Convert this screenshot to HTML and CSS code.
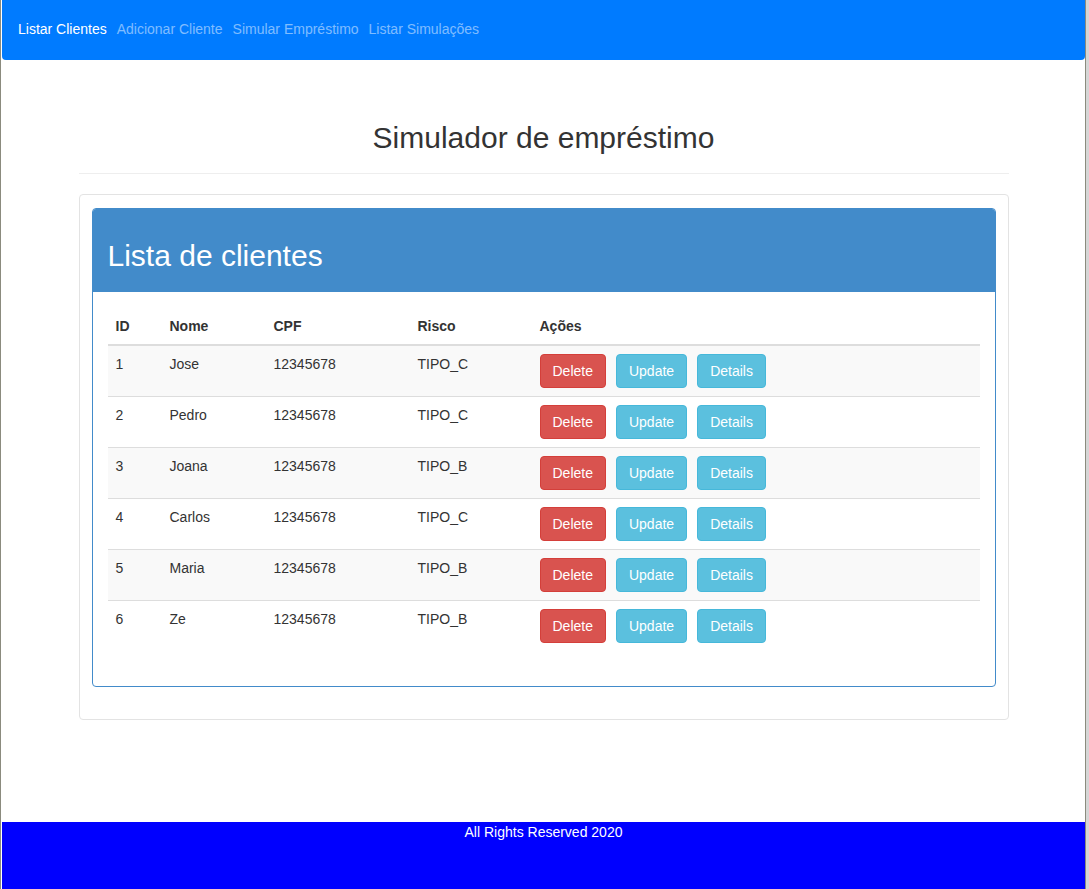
FILE: index.html
```html
<!DOCTYPE html>
<html lang="pt">
<head>
<meta charset="utf-8">
<title>Simulador de empréstimo</title>
<link rel="stylesheet" href="styles.css">
</head>
<body>
<div class="frame">
  <div class="page">
    <nav class="navbar">
      <a class="nav-link active" href="#">Listar Clientes</a>
      <a class="nav-link" href="#">Adicionar Cliente</a>
      <a class="nav-link" href="#">Simular Empréstimo</a>
      <a class="nav-link" href="#">Listar Simulações</a>
    </nav>
    <main class="container">
      <h1 class="page-title">Simulador de empréstimo</h1>
      <div class="well">
        <div class="panel">
          <div class="panel-heading">
            <h2 class="panel-title">Lista de clientes</h2>
          </div>
          <div class="panel-body">
            <table class="table">
              <thead>
                <tr>
                  <th class="c-id">ID</th>
                  <th class="c-nome">Nome</th>
                  <th class="c-cpf">CPF</th>
                  <th class="c-risco">Risco</th>
                  <th>Ações</th>
                </tr>
              </thead>
              <tbody>
                <tr><td>1</td><td>Jose</td><td>12345678</td><td>TIPO_C</td><td class="actions"><button class="btn btn-danger">Delete</button><button class="btn btn-info">Update</button><button class="btn btn-info">Details</button></td></tr>
                <tr><td>2</td><td>Pedro</td><td>12345678</td><td>TIPO_C</td><td class="actions"><button class="btn btn-danger">Delete</button><button class="btn btn-info">Update</button><button class="btn btn-info">Details</button></td></tr>
                <tr><td>3</td><td>Joana</td><td>12345678</td><td>TIPO_B</td><td class="actions"><button class="btn btn-danger">Delete</button><button class="btn btn-info">Update</button><button class="btn btn-info">Details</button></td></tr>
                <tr><td>4</td><td>Carlos</td><td>12345678</td><td>TIPO_C</td><td class="actions"><button class="btn btn-danger">Delete</button><button class="btn btn-info">Update</button><button class="btn btn-info">Details</button></td></tr>
                <tr><td>5</td><td>Maria</td><td>12345678</td><td>TIPO_B</td><td class="actions"><button class="btn btn-danger">Delete</button><button class="btn btn-info">Update</button><button class="btn btn-info">Details</button></td></tr>
                <tr><td>6</td><td>Ze</td><td>12345678</td><td>TIPO_B</td><td class="actions"><button class="btn btn-danger">Delete</button><button class="btn btn-info">Update</button><button class="btn btn-info">Details</button></td></tr>
              </tbody>
            </table>
          </div>
        </div>
      </div>
    </main>
    <footer class="footer">All Rights Reserved 2020</footer>
  </div>
</div>
</body>
</html>
```

FILE: styles.css
```css
* { box-sizing: border-box; }
html, body {
  margin: 0;
  padding: 0;
  height: 100%;
}
body {
  font-family: "Liberation Sans", Arial, sans-serif;
  font-size: 14px;
  line-height: 20px;
  color: #333;
  background: #d6d6d6;
}
.frame {
  display: flex;
  height: 889px;
  border-left: 1px solid #8b8b7e;
  padding-left: 1px;
  background: #fff;
  width: 1086px;
  border-right: 1px solid #8b8b7e;
}
.page {
  flex: 1;
  display: flex;
  flex-direction: column;
  background: #fff;
}
.navbar {
  height: 60px;
  background: #007bff;
  display: flex;
  align-items: center;
  padding: 0 0 2px 11px;
  border-radius: 0 0 4px 4px;
}
.nav-link {
  color: rgba(255, 255, 255, 0.5);
  text-decoration: none;
  padding: 0 5px;
  font-size: 14px;
}
.nav-link.active { color: #fff; }
.container {
  width: 930px;
  margin: 0 auto;
}
.page-title {
  margin: 61px 0 0;
  font-size: 30px;
  font-weight: 400;
  line-height: 33px;
  text-align: center;
  color: #333;
  padding-bottom: 19px;
  border-bottom: 1px solid #eee;
}
.well {
  margin-top: 20px;
  border: 1px solid #e3e3e3;
  border-radius: 4px;
  padding: 13px 12px 12px;
  background: #fff;
}
.panel {
  border: 1px solid #428bca;
  border-radius: 4px;
  margin-bottom: 20px;
}
.panel-heading {
  background: #428bca;
  padding: 10px 15px;
  border-radius: 3px 3px 0 0;
}
.panel-title {
  margin: 20px 0 10px;
  font-size: 30px;
  font-weight: 400;
  line-height: 33px;
  color: #fff;
}
.panel-body { padding: 16px 15px 15px; }
.table {
  width: 100%;
  border-collapse: collapse;
  margin-bottom: 20px;
}
.table th, .table td {
  padding: 8px;
  text-align: left;
  vertical-align: top;
  line-height: 20px;
}
.table th {
  font-weight: 700;
  border-bottom: 2px solid #ddd;
}
.table td { border-top: 1px solid #ddd; }
.table tbody tr:first-child td { border-top: 0; }
.table tbody tr:nth-child(odd) { background: #f9f9f9; }
.c-id { width: 54px; }
.c-nome { width: 104px; }
.c-cpf { width: 144px; }
.c-risco { width: 122px; }
.actions {
  display: flex;
  gap: 10px;
}
.btn {
  font-family: inherit;
  font-size: 14px;
  line-height: 20px;
  padding: 6px 12px;
  border-radius: 4px;
  border: 1px solid transparent;
  color: #fff;
  cursor: pointer;
}
.btn-danger { background: #d9534f; border-color: #d43f3a; }
.btn-info { background: #5bc0de; border-color: #46b8da; }
.footer {
  margin-top: auto;
  height: 67px;
  background: #0000ff;
  color: #fff;
  text-align: center;
  padding-top: 0;
}
```
